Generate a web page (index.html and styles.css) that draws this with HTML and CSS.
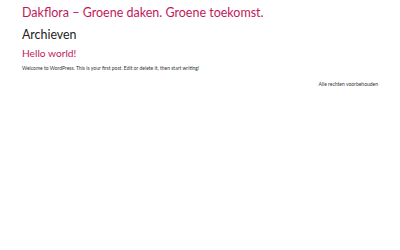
FILE: index.html
```html
<!DOCTYPE html>
<html lang="nl">
<head>
    <meta charset="utf-8">
    <title>Dakflora</title>
    <link rel="stylesheet" href="styles.css">
</head>
<body>
    <div id="wrapper">
        <header class="site-header">
            <h1 class="site-title">Dakflora &ndash; Groene daken. Groene toekomst.</h1>
        </header>
        <main class="content">
            <h2 class="archive-title">Archieven</h2>
            <article class="post">
                <h3 class="post-title">Hello world!</h3>
                <p class="post-text">Welcome to WordPress. This is your first post. Edit or delete it, then start writing!</p>
            </article>
        </main>
        <footer class="site-footer">
            <p>Alle rechten voorbehouden</p>
        </footer>
    </div>
</body>
</html>
```

FILE: styles.css
```css
body{
    margin:0;
    background:#fff;
    font-family:Lato,"Open Sans",sans-serif;
    color:#222;
}
#wrapper{
    padding:3.5px 22px 0 22px;
}
.site-title{
    margin:0;
    font-size:12.5px;
    font-weight:normal;
    color:#c2185b;
    line-height:18px;
}
.archive-title{
    margin:4px 0 0 0;
    font-size:12.4px;
    font-weight:normal;
    line-height:18px;
    color:#222;
}
.post-title{
    margin:1.25px 0 0 0;
    font-size:10.2px;
    font-weight:normal;
    line-height:16px;
    color:#c2185b;
}
.post-text{
    margin:3.5px 0 0 0;
    font-size:5px;
    line-height:8px;
    color:#333;
}
.site-footer{
    display:flex;
    justify-content:flex-end;
}
.site-footer p{
    margin:8.5px 0 0 0;
    font-size:5px;
    line-height:6px;
    color:#333;
}
```
